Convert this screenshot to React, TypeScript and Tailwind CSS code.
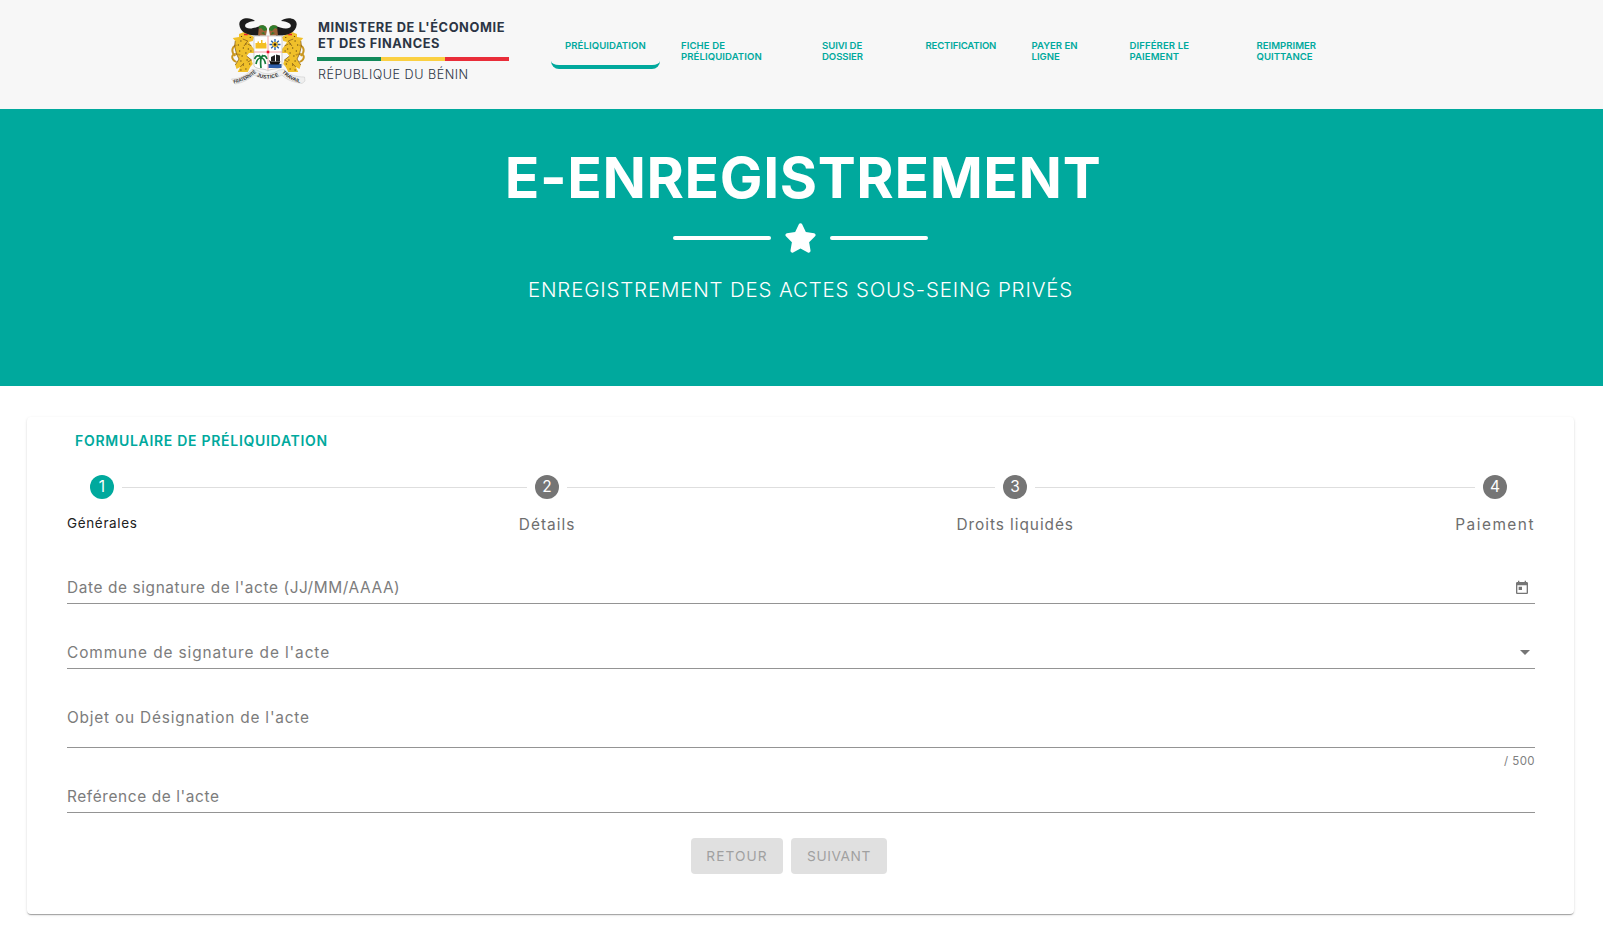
import { FaStar } from "react-icons/fa6";

function Leopard() {
  return (
    <g transform="translate(29 0) scale(1.25 1) translate(-29 0)">
      <path
        d="M17 24 L21 22 L25 24 L29 27 L28 31 L25 32 L27 36 L29 39 L29 43 L25 43 L23 46 L27 50 L28 54 L26 57 L24 62 L16 62 L18 57 L15 59 L14 55 L17 49 L15 44 L13.500 36 L14 31 L12 28 L17 27 Z"
        fill="#f0c02a"
      />
      <path
        d="M18 45 C10 41 10 50 15 52 M15 35 C10.500 37 11 43 14 46"
        fill="none"
        stroke="#c9961f"
        strokeWidth="1.6"
      />
      <path
        d="M19 26 v1 M26 27 v1 M18 31 h1 M16 35 h1 M22 34 h1 M20 38 h1 M17 41 h1 M24 39 h1 M19 46 h1 M18 51 h1 M23 50 h1 M20 55 h1 M25 54 h1 M18 60 h1 M22 59 h1 M26 41 h1 M22 43 h1"
        stroke="#5b4112"
        strokeWidth="0.9"
      />
      <path
        d="M14 31 L13.500 36 L15 44 L17 49 L14 55 M27 36 L24 34 M23 46 L27 50 L24 52 M18 57 L21 53 M20 29 L24 31 L21 36"
        fill="none"
        stroke="#8a611a"
        strokeWidth="0.7"
      />
      <path d="M21 24.500 h3" stroke="#e8222e" strokeWidth="1.5" />
    </g>
  );
}

function Horn() {
  return (
    <g>
      <path
        d="M30 11 C25 6.500 14 7.500 14.300 14.500 C15 23 24 26 35 25.500 L37 16 C31 16.500 26 20.500 21 17.500 C18 14.500 23 11.500 30 11 Z"
        fill="#1c1c1c"
      />
      <path d="M34 16 C39 14 42 17 42 20 L41 25.500 L33 25.500 Z" fill="#9c6238" />
      <path d="M34 16 C39 14 42 17 42 20 L39 21 L36 18 L34 19 Z" fill="#2f7d2c" />
      <path d="M36 23 l3 -1 l1 3 z" fill="#35772c" />
    </g>
  );
}

function CoatOfArms() {
  return (
    <svg viewBox="0 0 85 80" className="h-[80px] w-[85px] shrink-0" aria-hidden="true">
      <Leopard />
      <g transform="matrix(-1 0 0 1 86 0)">
        <Leopard />
      </g>
      <Horn />
      <g transform="matrix(-1 0 0 1 86 0)">
        <Horn />
      </g>
      <path d="M29 26 H57 V56 C54 60 46 58 43 61 C40 58 32 60 29 56 Z" fill="#fff" stroke="#b9b9b9" strokeWidth="0.7" />
      <path d="M30.500 38.500 V33 H32.500 V31.500 H34 V33 H36 V30 H37.500 V33 H40 V31.500 L41.500 34 V38.500 Z" fill="#f4bf25" />
      <path
        d="M50 29 V40 M44.500 34.500 H55.500 M46.200 30.700 L53.800 38.300 M53.800 30.700 L46.200 38.300"
        stroke="#2c62a8"
        strokeWidth="1.4"
      />
      <circle cx="50" cy="34.500" r="2.800" fill="#f0b823" />
      <circle cx="50" cy="34.500" r="1.300" fill="#222" />
      <path d="M29 42 H57 M43 26 V60" stroke="#f3a4a8" strokeWidth="1" />
      <rect x="41.700" y="40.700" width="2.600" height="2.600" fill="#e8112d" />
      <path
        d="M36 58 C35.500 54 35.500 51 36 48 M36 48 C33 44 31 46 29.500 49 M36 48 C39 44 41 46 42 49 M36 48 C33 48 31.500 51 31 54 M36 48 C39 48 40 51 40.500 54 M36 48 L34 45 M36 48 L38 45"
        fill="none"
        stroke="#167a3a"
        strokeWidth="1.700"
      />
      <rect x="43.500" y="54" width="13" height="4" fill="#2d5da8" />
      <path d="M44 50 L46 51.500 H55.500 L54 54.500 H45.500 Z" fill="#111" />
      <path d="M46 47 l4 -2 v6.500 h-4 z M51 44.500 l4 1 v6 h-4 z" fill="#222" />
      <path
        d="M6.500 69 C15 69 21 65 27 59.500 L32 60 C39 65 47 65 54 60 L59 59.500 C64 65 71 67 79.500 67 L80 71 L77 73.500 C67 72 62 70 57 65 C48 70 38 70 29 65 C23 70 17 73 10 74 Z"
        fill="#efefef"
        stroke="#cccccc"
        strokeWidth="0.6"
      />
      <defs>
        <path id="motto-a" d="M9 73.500 C18 71.500 25 68 32 62" />
        <path id="motto-b" d="M31.500 66 C38 69.500 48 69.500 55 65" />
        <path id="motto-c" d="M57 62.500 C62 68 68 71.500 77 73" />
      </defs>
      <g fontFamily="Liberation Sans" fontWeight="700" fontSize="5" fill="#2c2c2c">
        <text>
          <textPath href="#motto-a" textLength="25" lengthAdjust="spacingAndGlyphs">
            FRATERNITÉ
          </textPath>
        </text>
        <text>
          <textPath href="#motto-b" textLength="23">
            JUSTICE
          </textPath>
        </text>
        <text>
          <textPath href="#motto-c" textLength="21">
            TRAVAIL
          </textPath>
        </text>
      </g>
    </svg>
  );
}

function Logo() {
  return (
    <div className="flex">
      <CoatOfArms />
      <div className="ml-[7px] w-[192px] whitespace-nowrap pt-[10px] text-[#2b3544]">
        <p className="pl-px text-[12.8px] leading-[16px] font-bold tracking-[0.6px]">MINISTERE DE L'ÉCONOMIE</p>
        <p className="pl-px text-[12.8px] leading-[16px] font-bold tracking-[0.56px]">ET DES FINANCES</p>
        <div className="mt-[5px] flex h-1">
          <span className="flex-1 bg-[#138a5a]" />
          <span className="flex-1 bg-[#fbd042]" />
          <span className="flex-1 bg-[#e92d39]" />
        </div>
        <p className="mt-[5px] pl-px text-[12.6px] leading-[18px] font-light tracking-[0.5px]">RÉPUBLIQUE DU BÉNIN</p>
      </div>
    </div>
  );
}

const navItems = [
  { lines: ["PRÉLIQUIDATION"], box: "w-[116px]", tracking: "tracking-[0.07px]", active: true },
  { lines: ["FICHE DE", "PRÉLIQUIDATION"], box: "w-[141px]", tracking: "tracking-[0.07px]" },
  { lines: ["SUIVI DE", "DOSSIER"], box: "w-[103.5px]", tracking: "tracking-[-0.08px]" },
  { lines: ["RECTIFICATION"], box: "w-[106px]", tracking: "tracking-[-0.18px]" },
  { lines: ["PAYER EN", "LIGNE"], box: "w-[98px]", tracking: "tracking-normal" },
  { lines: ["DIFFÉRER LE", "PAIEMENT"], box: "w-[127px]", tracking: "tracking-[0.08px]" },
  { lines: ["REIMPRIMER", "QUITTANCE"], box: "w-[100px]", tracking: "tracking-[0px]" },
];

function Header() {
  return (
    <header className="flex h-[109px] bg-[#f7f7f7] pt-[10px] pl-[225px]">
      <Logo />
      <nav className="ml-[42px] flex pt-[20px] text-[9.6px] leading-[11px] font-semibold text-[#00a99d]">
        {navItems.map((item) => (
          <div key={item.lines.join(" ")} className={item.box}>
            <a
              className={
                item.active
                  ? "block h-[39px] w-[109px] rounded-[8px] border-b-4 border-[#00a99d] pt-[10px] pl-[14px]"
                  : "block h-[39px] pt-[10px] pl-[14px]"
              }
            >
              {item.lines.map((line) => (
                <span key={line} className={`block whitespace-nowrap ${item.tracking}`}>
                  {line}
                </span>
              ))}
            </a>
          </div>
        ))}
      </nav>
    </header>
  );
}

function Hero() {
  return (
    <section className="flex h-[277px] flex-col items-center bg-[#00a99d] pt-[37px] pr-[2px] text-white">
      <h1 className="pl-[5px] text-[57px] leading-[64px] font-bold tracking-[0.61px]">E-ENREGISTREMENT</h1>
      <div className="mt-[13px] flex items-center">
        <span className="h-1 w-[98px] rounded-full bg-white" />
        <FaStar className="mx-[13px] h-[30px] w-[33px]" />
        <span className="h-1 w-[98px] rounded-full bg-white" />
      </div>
      <p className="mt-[22px] text-[20.5px] leading-[30px] font-light tracking-[0.82px]">
        ENREGISTREMENT DES ACTES SOUS-SEING PRIVÉS
      </p>
    </section>
  );
}

function StepDot({ n, active = false }: { n: number; active?: boolean }) {
  return (
    <span
      className={`flex size-6 shrink-0 items-center justify-center rounded-full text-[15.5px] leading-6 text-white ${
        active ? "bg-[#00a99d]" : "bg-[#757575]"
      }`}
    >
      {n}
    </span>
  );
}

function Stepper() {
  return (
    <div className="mt-[24px]">
      <div className="flex items-center pl-[23px]">
        <StepDot n={1} active />
        <span className="mx-2 h-px w-[405px] bg-[#dedede]" />
        <StepDot n={2} />
        <span className="mx-2 h-px w-[428px] bg-[#dedede]" />
        <StepDot n={3} />
        <span className="mx-2 h-px w-[440px] bg-[#dedede]" />
        <StepDot n={4} />
      </div>
      <div className="mt-[15px] flex justify-between text-[15.4px] leading-[22px] text-[#6e6e6e]">
        <span className="text-[13.5px] leading-[18px] tracking-[0.65px] text-[#212121]">Générales</span>
        <span className="tracking-[1px]">Détails</span>
        <span className="tracking-[0.95px]">Droits liquidés</span>
        <span className="tracking-[1.5px]">Paiement</span>
      </div>
    </div>
  );
}

function CalendarIcon() {
  return (
    <svg viewBox="0 0 24 24" className="mt-[3px] mr-[5px] size-4" fill="#757575" aria-hidden="true">
      <path d="M19 3h-1V1h-2v2H8V1H6v2H5c-1.110 0-1.990.9-1.990 2L3 19c0 1.100.890 2 2 2h14c1.100 0 2-.9 2-2V5c0-1.100-.9-2-2-2zm0 16H5V8h14v11zM7 10h5v5H7z" />
    </svg>
  );
}

function CaretIcon() {
  return (
    <svg viewBox="0 0 10 5" className="mt-[8px] mr-[5px] h-[5px] w-[10px]" fill="#757575" aria-hidden="true">
      <path d="M0 0h10L5 5z" />
    </svg>
  );
}

const fieldBase = "flex items-start justify-between border-b border-[#949494] text-[15.4px] leading-[21px] text-[#7c7c7c]";

function Form() {
  return (
    <form>
      <div className={`${fieldBase} mt-[41px] h-[27px]`}>
        <span className="tracking-[0.61px]">Date de signature de l'acte (JJ/MM/AAAA)</span>
        <CalendarIcon />
      </div>
      <div className={`${fieldBase} mt-[38px] h-[27px]`}>
        <span className="tracking-[0.9px]">Commune de signature de l'acte</span>
        <CaretIcon />
      </div>
      <div className={`${fieldBase} mt-[38px] h-[41px]`}>
        <span className="tracking-[0.8px]">Objet ou Désignation de l'acte</span>
      </div>
      <p className="mt-[6px] text-right text-[11.5px] leading-[14px] tracking-[0.4px] text-[#808080]">/ 500</p>
      <div className={`${fieldBase} mt-[18px] h-[27px]`}>
        <span className="tracking-[0.61px]">Reférence de l'acte</span>
      </div>
      <div className="mt-[25px] ml-[624px] flex gap-2 text-[13.7px] leading-[36px] text-[#a0a0a0]">
        <button type="button" disabled className="h-9 w-[92px] rounded bg-[#e0e0e0] tracking-[1.1px]">
          RETOUR
        </button>
        <button type="button" disabled className="h-9 w-[96px] rounded bg-[#e0e0e0] tracking-[0.6px]">
          SUIVANT
        </button>
      </div>
    </form>
  );
}

export default function App() {
  return (
    <div className="h-[928px] overflow-hidden bg-white font-['Inter',sans-serif]">
      <Header />
      <Hero />
      <main className="mx-[27px] mt-[31px] h-[497px] w-[1547px] rounded bg-white pt-[14px] pr-[39px] pl-[40px] shadow-[0_2px_1px_-1px_rgba(0,0,0,0.2),0_1px_1px_0_rgba(0,0,0,0.14),0_1px_3px_0_rgba(0,0,0,0.12)]">
        <h2 className="pl-[8px] text-[14px] leading-[20px] font-semibold tracking-[0.71px] text-[#00a99d]">
          FORMULAIRE DE PRÉLIQUIDATION
        </h2>
        <Stepper />
        <Form />
      </main>
    </div>
  );
}
